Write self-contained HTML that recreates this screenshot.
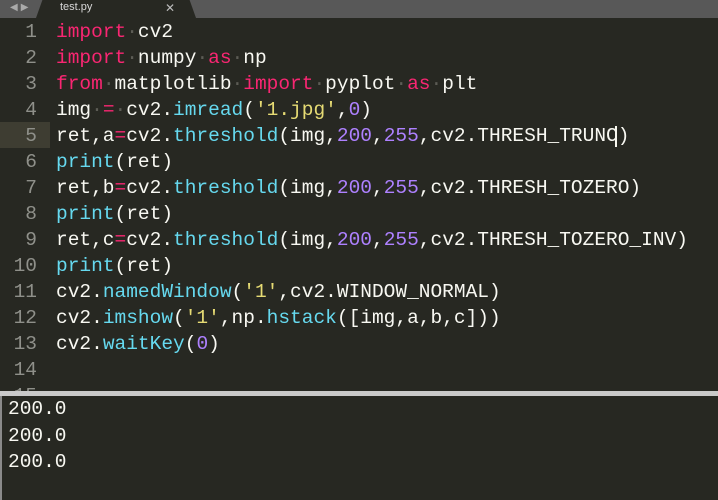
<!DOCTYPE html>
<html><head><meta charset="utf-8"><style>
*{margin:0;padding:0}
body{width:718px;height:500px;background:#272822;overflow:hidden;position:relative;font-family:"Liberation Mono",monospace}
#tabbar{position:absolute;left:0;top:0;width:718px;height:18px;background:#585858}
#tab{position:absolute;left:36px;top:0;width:160px;height:18px;background:#272822;clip-path:polygon(4% 0,96% 0,100% 100%,0 100%)}
#tabname{position:absolute;left:60px;top:1px;font:11px "Liberation Sans",sans-serif;color:#d8d8d8}
#tabx{position:absolute;left:165px;top:1px;font:12px "Liberation Sans",sans-serif;color:#bbb}
#arrows{position:absolute;left:10px;top:2px;font:10px "Liberation Sans",sans-serif;color:#aaa;letter-spacing:3px}
#hl{position:absolute;left:0;top:122px;width:50px;height:26px;background:#3e3d32}
.g{position:absolute;left:0;width:37px;text-align:right;color:#8f908a;font-size:19.5px;line-height:26px;top:1px}
.c{position:absolute;left:56px;font-size:19.5px;line-height:26px;color:#f8f8f2;white-space:pre}
.k{color:#f92672}.f{color:#66d9ef}.n{color:#ae81ff}.s{color:#e6db74}.d{color:#5c5c55}
#sep{position:absolute;left:0;top:391px;width:718px;height:5px;background:#c9c9c9}
#out{position:absolute;left:0;top:396px;width:718px;height:104px;background:#272822;border-left:2px solid #8a8a8a;box-sizing:border-box}
.o{position:absolute;left:6px;font-size:19.5px;line-height:26px;color:#f8f8f2}
#cur{position:absolute;left:615px;top:126px;width:2px;height:21px;background:#f8f8f0}
</style></head><body>
<div id="tabbar"><div id="arrows">◀▶</div><div id="tab"></div><div id="tabname">test.py</div><div id="tabx">✕</div></div>
<div id="hl"></div>
<div class="g" style="top:19px">1</div><div class="g" style="top:45px">2</div><div class="g" style="top:71px">3</div><div class="g" style="top:97px">4</div><div class="g" style="top:123px">5</div><div class="g" style="top:149px">6</div><div class="g" style="top:175px">7</div><div class="g" style="top:201px">8</div><div class="g" style="top:227px">9</div><div class="g" style="top:253px">10</div><div class="g" style="top:279px">11</div><div class="g" style="top:305px">12</div><div class="g" style="top:331px">13</div><div class="g" style="top:357px">14</div><div class="g" style="top:383px">15</div>
<div class="c" style="top:19px"><span class="k">import</span><span class="d">·</span>cv2</div>
<div class="c" style="top:45px"><span class="k">import</span><span class="d">·</span>numpy<span class="d">·</span><span class="k">as</span><span class="d">·</span>np</div>
<div class="c" style="top:71px"><span class="k">from</span><span class="d">·</span>matplotlib<span class="d">·</span><span class="k">import</span><span class="d">·</span>pyplot<span class="d">·</span><span class="k">as</span><span class="d">·</span>plt</div>
<div class="c" style="top:97px">img<span class="d">·</span><span class="k">=</span><span class="d">·</span>cv2.<span class="f">imread</span>(<span class="s">'1.jpg'</span>,<span class="n">0</span>)</div>
<div class="c" style="top:123px">ret,a<span class="k">=</span>cv2.<span class="f">threshold</span>(img,<span class="n">200</span>,<span class="n">255</span>,cv2.THRESH_TRUNC)</div>
<div class="c" style="top:149px"><span class="f">print</span>(ret)</div>
<div class="c" style="top:175px">ret,b<span class="k">=</span>cv2.<span class="f">threshold</span>(img,<span class="n">200</span>,<span class="n">255</span>,cv2.THRESH_TOZERO)</div>
<div class="c" style="top:201px"><span class="f">print</span>(ret)</div>
<div class="c" style="top:227px">ret,c<span class="k">=</span>cv2.<span class="f">threshold</span>(img,<span class="n">200</span>,<span class="n">255</span>,cv2.THRESH_TOZERO_INV)</div>
<div class="c" style="top:253px"><span class="f">print</span>(ret)</div>
<div class="c" style="top:279px">cv2.<span class="f">namedWindow</span>(<span class="s">'1'</span>,cv2.WINDOW_NORMAL)</div>
<div class="c" style="top:305px">cv2.<span class="f">imshow</span>(<span class="s">'1'</span>,np.<span class="f">hstack</span>([img,a,b,c]))</div>
<div class="c" style="top:331px">cv2.<span class="f">waitKey</span>(<span class="n">0</span>)</div>
<div id="cur"></div>
<div id="sep"></div>
<div id="out"><div class="o" style="top:0px">200.0</div><div class="o" style="top:27px">200.0</div><div class="o" style="top:53px">200.0</div></div>
</body></html>
